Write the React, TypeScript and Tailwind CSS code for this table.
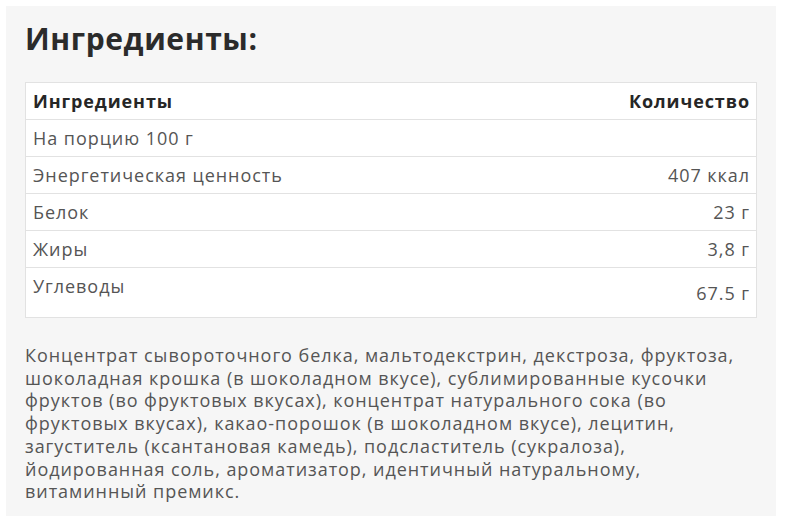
import React from "react";

const rows: [string, string][] = [
  ["На порцию 100 г", ""],
  ["Энергетическая ценность", "407 ккал"],
  ["Белок", "23 г"],
  ["Жиры", "3,8 г"],
];

const lines = [
  "Концентрат сывороточного белка, мальтодекстрин, декстроза, фруктоза,",
  "шоколадная крошка (в шоколадном вкусе), сублимированные кусочки",
  "фруктов (во фруктовых вкусах), концентрат натурального сока (во",
  "фруктовых вкусах), какао-порошок (в шоколадном вкусе), лецитин,",
  "загуститель (ксантановая камедь), подсластитель (сукралоза),",
  "йодированная соль, ароматизатор, идентичный натуральному,",
  "витаминный премикс.",
];

export default function App() {
  return (
    <div className="w-[785px] h-[532px] bg-white pt-[6px] pl-[6px] font-['Open_Sans',sans-serif]">
      <div className="w-[770px] h-[510px] bg-[#f6f6f6] px-[19px] pt-[13px]">
        <h1 className="text-[30px] leading-[40px] font-bold text-[#2b2b2b] tracking-[0.6px]">
          Ингредиенты:
        </h1>
        <div className="mt-[23px] w-[732px] bg-white border border-[#e2e2e2] text-[18px] tracking-[0.95px]">
          <div className="flex justify-between items-center h-[37px] pl-[7px] pr-[6px] border-b border-[#e2e2e2] font-bold text-[#262626] tracking-[0.9px]">
            <span>Ингредиенты</span>
            <span>Количество</span>
          </div>
          {rows.map(([a, b], i) => (
            <div
              key={i}
              className="flex justify-between items-center h-[37px] pl-[7px] pr-[6px] border-b border-[#e2e2e2] text-[#555]"
            >
              <span>{a}</span>
              <span>{b}</span>
            </div>
          ))}
          <div className="flex justify-between h-[49px] pl-[7px] pr-[6px] text-[#555]">
            <span className="pt-[5px]">Углеводы</span>
            <span className="self-center pt-[2px]">67.5 г</span>
          </div>
        </div>
        <p className="mt-[26px] text-[18px] tracking-[0.95px] leading-[22.7px] text-[#555]">
          {lines.map((l, i) => (
            <React.Fragment key={i}>
              {l}
              {i < lines.length - 1 && <br />}
            </React.Fragment>
          ))}
        </p>
      </div>
    </div>
  );
}
